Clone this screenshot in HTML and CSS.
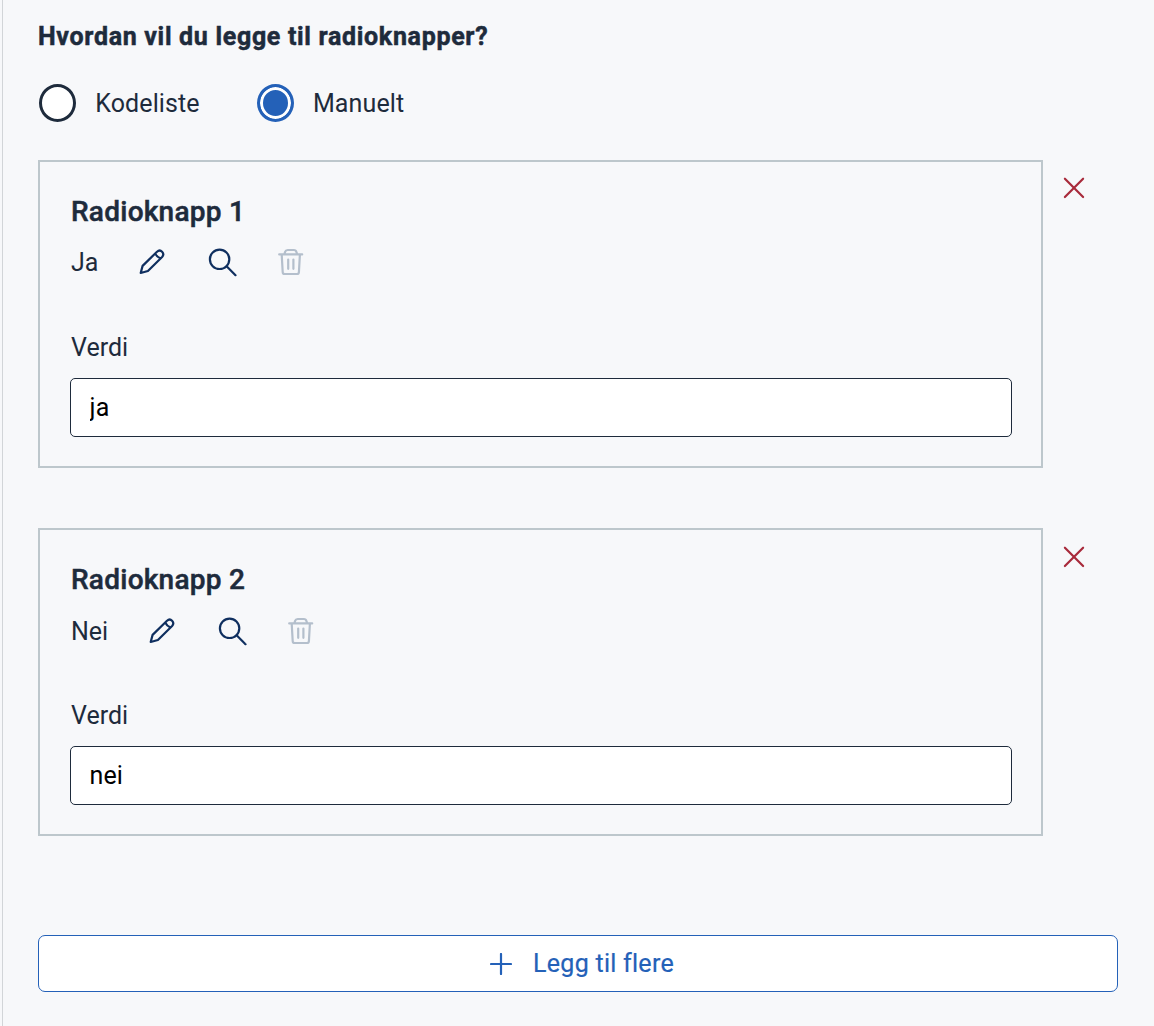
FILE: index.html
```html
<!DOCTYPE html>
<html lang="nb">
<head>
<meta charset="utf-8">
<title>Radioknapper</title>
<link rel="stylesheet" href="styles.css">
</head>
<body>
<svg class="defs" width="0" height="0">
  <symbol id="pencil" viewBox="0 0 26 26"><path d="M1.7 24 L3.6 16.9 L18 2.7 Q20.7 0.3 23.1 2.7 Q25.5 5.3 23.1 8 L8.9 22 Z M16.2 4.5 Q18 8.2 21.5 9.6"/></symbol>
  <symbol id="search" viewBox="0 0 30 30"><circle cx="12.6" cy="11.3" r="9.7"/><path d="M19.6 18.3 L28.5 27.2" stroke-linecap="round"/></symbol>
  <symbol id="trash" viewBox="0 0 26 28"><path d="M1.2 6.4 H24.2 M6.4 6 L7.1 3.9 Q7.7 2 9.7 2 H15.9 Q17.9 2 18.4 3.9 L19.1 6 M3.7 6.6 L4.7 24.2 Q4.8 26 6.7 26 H18.9 Q20.8 26 20.9 24.2 L21.9 6.6 M10.2 11.5 V20.8 M15.4 11.5 V20.8" stroke-linecap="round"/></symbol>
  <symbol id="cross" viewBox="0 0 22 22"><path d="M1.9 1.7 L20.1 20 M20.1 1.7 L1.9 20" stroke-linecap="round"/></symbol>
</svg>
<main class="panel">
  <h1 class="title">Hvordan vil du legge til radioknapper?</h1>
  <div class="choices">
    <div class="choice"><span class="radio"></span><span>Kodeliste</span></div>
    <div class="choice"><span class="radio checked"></span><span>Manuelt</span></div>
  </div>
  <div class="row">
    <section class="card">
      <h2 class="heading">Radioknapp 1</h2>
      <div class="tools"><span class="name">Ja</span><svg class="pencil"><use href="#pencil"/></svg><svg class="search"><use href="#search"/></svg><svg class="trash"><use href="#trash"/></svg></div>
      <label class="label" for="v1">Verdi</label>
      <input class="field" id="v1" value="ja">
    </section>
    <svg class="cross"><use href="#cross"/></svg>
  </div>
  <div class="row lower">
    <section class="card">
      <h2 class="heading">Radioknapp 2</h2>
      <div class="tools"><span class="name">Nei</span><svg class="pencil"><use href="#pencil"/></svg><svg class="search"><use href="#search"/></svg><svg class="trash"><use href="#trash"/></svg></div>
      <label class="label" for="v2">Verdi</label>
      <input class="field" id="v2" value="nei">
    </section>
    <svg class="cross"><use href="#cross"/></svg>
  </div>
  <button class="add"><svg class="plus" viewBox="0 0 22 22"><path d="M11 1 V21 M1 11 H21" stroke-linecap="round"/></svg><span>Legg til flere</span></button>
</main>
</body>
</html>
```
FILE: styles.css
```css
* { box-sizing: border-box; }
body { margin: 0; background: #f7f8fa; color: #1e2b3c; font: 25px/30px Roboto, sans-serif; }
.defs { display: block; height: 0; }
.panel { height: 1026px; margin-left: 2px; border-left: 1px solid #d2d5d8; padding: 22px 36px 0 35px; }
.title { margin: 0; font-size: 25px; line-height: 30px; font-weight: 700; letter-spacing: 0.68px; -webkit-text-stroke: 0.5px #1e2b3c; }
.choices { display: flex; gap: 57px; margin-top: 32px; height: 38px; padding-left: 1px; }
.choice { display: flex; align-items: center; gap: 19.2px; letter-spacing: 0.12px; }
.choice span:last-child { padding-top: 2px; }
.radio { width: 37px; height: 38px; border: 3px solid #1e2b3c; border-radius: 50%; background: #fff; }
.checked { border-color: #2461b8; background: #2461b8; box-shadow: inset 0 0 0 3px #fff; }
.row { display: flex; gap: 20px; margin-top: 38px; }
.row + .row { margin-top: 60px; }
.card { width: 1005px; height: 308px; border: 2px solid #bdc7cc; padding: 34px 29px 0 30px; }
.heading { margin: 0 0 0 1px; font-size: 28px; line-height: 32px; font-weight: 500; letter-spacing: 0.25px; -webkit-text-stroke: 0.5px #1e2b3c; }
.tools { display: flex; align-items: center; margin: 18px 0 0 1px; height: 32px; }
.lower .tools { margin-top: 19px; }
.name { padding-top: 2px; }
svg { fill: none; stroke: #0f2f5f; stroke-width: 2.2; stroke-linejoin: round; }
.pencil { width: 26px; height: 26px; margin-left: 41px; }
.search { width: 30px; height: 30px; margin: 1px 0 0 42px; }
.trash { width: 26px; height: 28px; margin-left: 41px; stroke: #b4bfcc; }
.label { display: block; margin: 55px 0 0 1px; }
.lower .label { margin-top: 54px; }
.field { display: block; width: 942px; height: 59px; margin-top: 15px; border: 1px solid #1e2b3c; border-radius: 5px; background: #fff; padding: 0 18.5px; color: #000; font: inherit; letter-spacing: 0.15px; }
.cross { width: 22px; height: 22px; margin-top: 17px; stroke: #a82a3b; }
.lower .cross { margin-top: 18px; }
.add { display: flex; align-items: center; justify-content: center; gap: 21px; width: 1080px; height: 57px; margin-top: 99px; padding: 0 0 0 8px; border: 1px solid #2461b8; border-radius: 7px; background: #fff; color: #2461b8; font: inherit; font-weight: 400; letter-spacing: 0.27px; -webkit-text-stroke: 0.2px #2461b8; }
.add span { padding-top: 1px; }
.plus { width: 22px; height: 22px; stroke: #2461b8; }
```
